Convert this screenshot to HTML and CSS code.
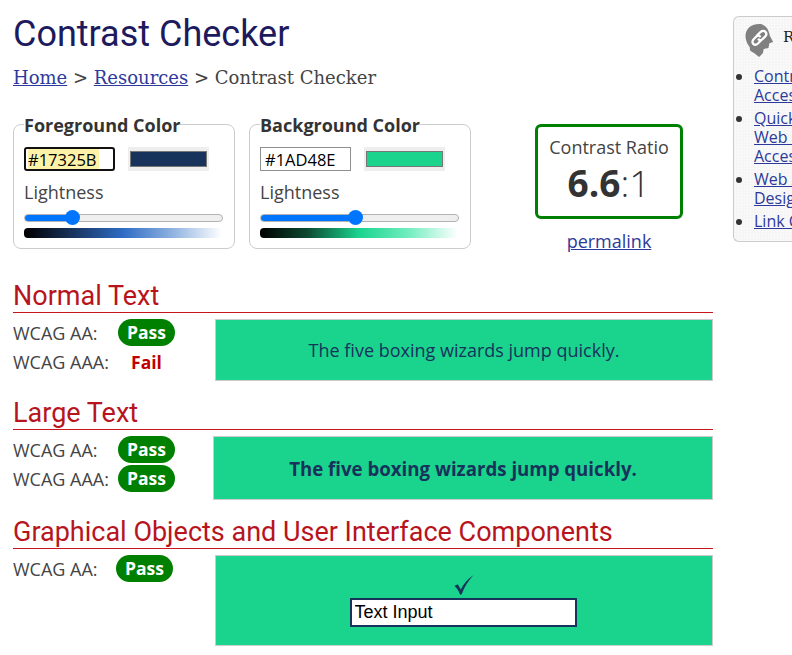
FILE: index.html
```html
<!DOCTYPE html>
<html lang="en">
<head>
<meta charset="utf-8">
<title>Contrast Checker</title>
<link rel="stylesheet" href="styles.css">
</head>
<body>
<div class="page">
<main class="main">
  <h1>Contrast Checker</h1>
  <p class="crumbs"><a href="#">Home</a> &gt; <a href="#">Resources</a> &gt; Contrast Checker</p>
  <div class="controls">
    <fieldset class="picker">
      <legend>Foreground Color</legend>
      <div class="color-row">
        <input class="hex hex-focus" type="text" value="#17325B">
        <span class="swatch"><span class="swatch-fill fg-fill"></span></span>
      </div>
      <label class="light-label">Lightness</label>
      <input class="range range-fg" type="range" min="0" max="100" value="22">
      <div class="strip strip-fg"></div>
    </fieldset>
    <fieldset class="picker">
      <legend>Background Color</legend>
      <div class="color-row">
        <input class="hex" type="text" value="#1AD48E">
        <span class="swatch"><span class="swatch-fill bg-fill"></span></span>
      </div>
      <label class="light-label">Lightness</label>
      <input class="range range-bg" type="range" min="0" max="100" value="48">
      <div class="strip strip-bg"></div>
    </fieldset>
    <div class="ratio-col">
      <div class="ratio-box">
        <div class="ratio-title">Contrast Ratio</div>
        <div class="ratio-value"><strong>6.6</strong>:1</div>
      </div>
      <a class="permalink" href="#">permalink</a>
    </div>
  </div>

  <h2 class="h-normal">Normal Text</h2>
  <div class="result">
    <div class="verdicts">
      <div class="verdict"><span class="level">WCAG AA:</span><span class="pass">Pass</span></div>
      <div class="verdict"><span class="level">WCAG AAA:</span><span class="fail">Fail</span></div>
    </div>
    <div class="sample sample-normal">The five boxing wizards jump quickly.</div>
  </div>

  <h2 class="h-large">Large Text</h2>
  <div class="result">
    <div class="verdicts">
      <div class="verdict"><span class="level">WCAG AA:</span><span class="pass">Pass</span></div>
      <div class="verdict"><span class="level">WCAG AAA:</span><span class="pass">Pass</span></div>
    </div>
    <div class="sample sample-large">The five boxing wizards jump quickly.</div>
  </div>

  <h2 class="h-graph">Graphical Objects and User Interface Components</h2>
  <div class="result">
    <div class="verdicts verdicts-graph">
      <div class="verdict"><span class="level">WCAG AA:</span><span class="pass">Pass</span></div>
    </div>
    <div class="sample sample-graph">
      <svg class="check" viewBox="0 0 20 20" width="20" height="21" aria-hidden="true"><path d="M0.5 11.5 L3.8 9.8 L6.8 15 C9.5 9.5 13.5 4.5 19.5 0.5 C14.5 6 10.5 12 7.6 20 L6 20 C4.8 16.5 3 13.5 0.5 11.5 Z" fill="#17325B"/></svg>
      <input class="text-input" type="text" value="Text Input">
    </div>
  </div>
</main>
<aside class="side">
  <div class="side-head">
    <svg class="head-icon" viewBox="0 0 32 36" width="30" height="35" aria-hidden="true">
      <path d="M15 0.5 C7 0.5 1 5 0.5 13 C0.5 18 2.5 22 5 25 L5.5 29 L10 31.5 L15 35.5 L19 31.5 L20 27 L25 26 L26 21 L30 19.5 L26.5 13 C25.5 6 21.5 0.5 15 0.5 Z" fill="#808080"/>
      <g fill="none" stroke="#fff" stroke-width="2.4" stroke-linecap="round">
        <path d="M13 12.5 L16.5 9 C18.2 7.5 20.6 7.5 21.8 8.8 C23.1 10.2 22.9 12.4 21.4 13.9 L18.4 16.8 C17.2 17.8 15.6 17.8 14.6 16.8"/>
        <path d="M16 13.5 C14.8 12.5 13.2 12.7 12 13.8 L9.2 16.6 C7.7 18.1 7.5 20.3 8.8 21.6 C10.1 22.8 12.3 22.6 13.8 21.2 L17 18"/>
      </g>
    </svg>
    <span class="side-title">Resources</span>
  </div>
  <ul class="side-list">
    <li><a href="#">Contrast and Color<br>Accessibility</a></li>
    <li><a href="#">Quick Reference:<br>Web Content<br>Accessibility</a></li>
    <li><a href="#">Web Accessible<br>Design</a></li>
    <li><a href="#">Link Contrast</a></li>
  </ul>
</aside>
</div>
</body>
</html>
```
FILE: styles.css
```css
* { box-sizing: border-box; }
html, body { margin: 0; padding: 0; height: 655px; overflow: hidden; background: #fff; }
body { font-family: "Open Sans", sans-serif; font-size: 16px; color: #333; }
a { color: #2d3a9b; }
.page { display: flex; width: 792px; align-items: flex-start; overflow: hidden; }
.main { width: 713px; padding-left: 13px; flex: none; }
h1 { font-family: Roboto, sans-serif; font-weight: 400; font-size: 36px; line-height: 40px; color: #1d1a5e; margin: 14px 0 0; }
.crumbs { font-family: "DejaVu Serif", serif; font-size: 18px; line-height: 24px; margin: 12px 0 0; color: #444; }
.controls { display: flex; align-items: flex-start; margin-top: 22px; height: 170px; }
.picker { width: 222px; height: 137px; margin: 0 14px 0 0; padding: 0 10px; border: 1px solid #ccc; border-radius: 8px; min-width: 0; }
.picker legend { font-weight: 700; font-size: 18px; line-height: 22px; padding: 2px 0 0; color: #333; }
.color-row { display: flex; gap: 13px; margin-top: 11px; align-items: center; }
.hex { width: 91px; height: 24px; font-family: "Open Sans", sans-serif; font-size: 16.5px; padding: 0 4px; border: 1px solid #8f8f8f; border-radius: 0; color: #000; background: #fff; outline: none; }
.hex-focus { border: 2px solid #111; border-radius: 3px; padding: 0 2px; background: linear-gradient(90deg, #fdf2a8 0 71px, #fff 71px); background-origin: content-box; background-repeat: no-repeat; }
.swatch { display: block; width: 81px; height: 24px; background: #eee; padding: 4px 2px; }
.swatch-fill { display: block; height: 16px; border: 1px solid #777; }
.fg-fill { background: #17325B; }
.bg-fill { background: #1AD48E; }
.light-label { display: block; font-size: 18px; line-height: 24px; margin-top: 9px; color: #444; }
.range { -webkit-appearance: none; appearance: none; display: block; width: 199px; height: 15px; margin: 6px 0 0; background: transparent; }
.range::-webkit-slider-runnable-track { height: 8px; border-radius: 4px; border: 1px solid #b3b3b3; }
.range-fg::-webkit-slider-runnable-track { background: linear-gradient(90deg, #0075ff 0 24%, #efefef 24%); }
.range-bg::-webkit-slider-runnable-track { background: linear-gradient(90deg, #0075ff 0 47%, #efefef 47%); }
.range::-webkit-slider-thumb { -webkit-appearance: none; width: 15px; height: 15px; border-radius: 50%; background: #0075ff; margin-top: -4.5px; }
.strip { width: 198px; height: 10px; margin-top: 3px; border-radius: 4px; }
.strip-fg { background: linear-gradient(90deg, #000 0, #17325b 24%, #2f6cc4 50%, #8fb2e0 75%, #fff 100%); }
.strip-bg { background: linear-gradient(90deg, #000 0, #0c4a32 24%, #1ad48e 50%, #72edc0 75%, #fff 100%); }
.ratio-col { width: 148px; margin: 12px 0 0 50px; text-align: center; flex: none; }
.ratio-box { height: 95px; border: 3px solid #008000; border-radius: 6px; padding-top: 9px; }
.ratio-title { font-size: 18px; line-height: 22px; color: #444; }
.ratio-value { font-size: 37px; line-height: 46px; margin-top: 2px; color: #333; font-weight: 300; }
.ratio-value strong { font-weight: 700; }
.permalink { display: inline-block; font-size: 18px; line-height: 24px; margin-top: 10px; }
h2 { font-family: Roboto, sans-serif; font-weight: 400; font-size: 27px; line-height: 28px; color: #b8141d; margin: 0; border-bottom: 1px solid #c8141d; height: 31px; }
.h-normal { margin-top: 0; }
.h-large { margin-top: 18px; }
.h-graph { margin-top: 18px; }
.result { display: flex; margin-top: 6px; }
.verdicts { width: 200px; flex: none; margin-top: -1px; }
.verdict { display: flex; align-items: center; height: 29px; }
.level { width: 105px; font-size: 18px; color: #444; flex: none; }
.pass { width: 57px; height: 27px; border-radius: 14px; background: #008000; color: #fff; font-weight: 700; font-size: 17.5px; line-height: 27px; text-align: center; }
.fail { width: 57px; color: #c00000; font-weight: 700; font-size: 17.5px; text-align: center; }
.sample { flex: 1; display: flex; align-items: center; justify-content: center; background: #1AD48E; border: 1px solid #ccc; color: #17325B; }
.sample-normal { margin-left: 2px; height: 62px; font-size: 18px; }
.sample-large { height: 64px; font-size: 18.66px; font-weight: 700; }
.sample-graph { margin-left: 2px; height: 91px; flex-direction: column; }
.verdicts-graph .pass { margin-left: -2px; }
.check { display: block; margin: 0 1px 3px 0; }
.text-input { width: 227px; height: 29px; margin-right: 2px; border: 2px solid #17325B; background: #fff; color: #000; font-family: "Liberation Sans", sans-serif; font-size: 18px; padding: 0 3px; outline: none; border-radius: 0; }
.side { margin: 16px 0 0 20px; width: 59px; height: 226px; flex: none; border: 1px solid #ccc; border-right: 0; border-radius: 6px 0 0 6px; background-color: #f6f6f6; background-image: radial-gradient(#fff 0.6px, transparent 0.7px); background-size: 3px 3px; overflow: hidden; }
.side-head { display: flex; align-items: center; padding: 4px 0 0 11px; height: 42px; }
.head-icon { flex: none; }
.side-title { font-family: "DejaVu Serif", serif; font-size: 15px; margin-left: 8px; color: #222; margin-top: -6px; white-space: nowrap; }
.side-list { margin: 8px 0 0; padding: 0 0 0 20px; font-size: 16px; line-height: 19px; }
.side-list li { margin-bottom: 4px; white-space: nowrap; }
```
